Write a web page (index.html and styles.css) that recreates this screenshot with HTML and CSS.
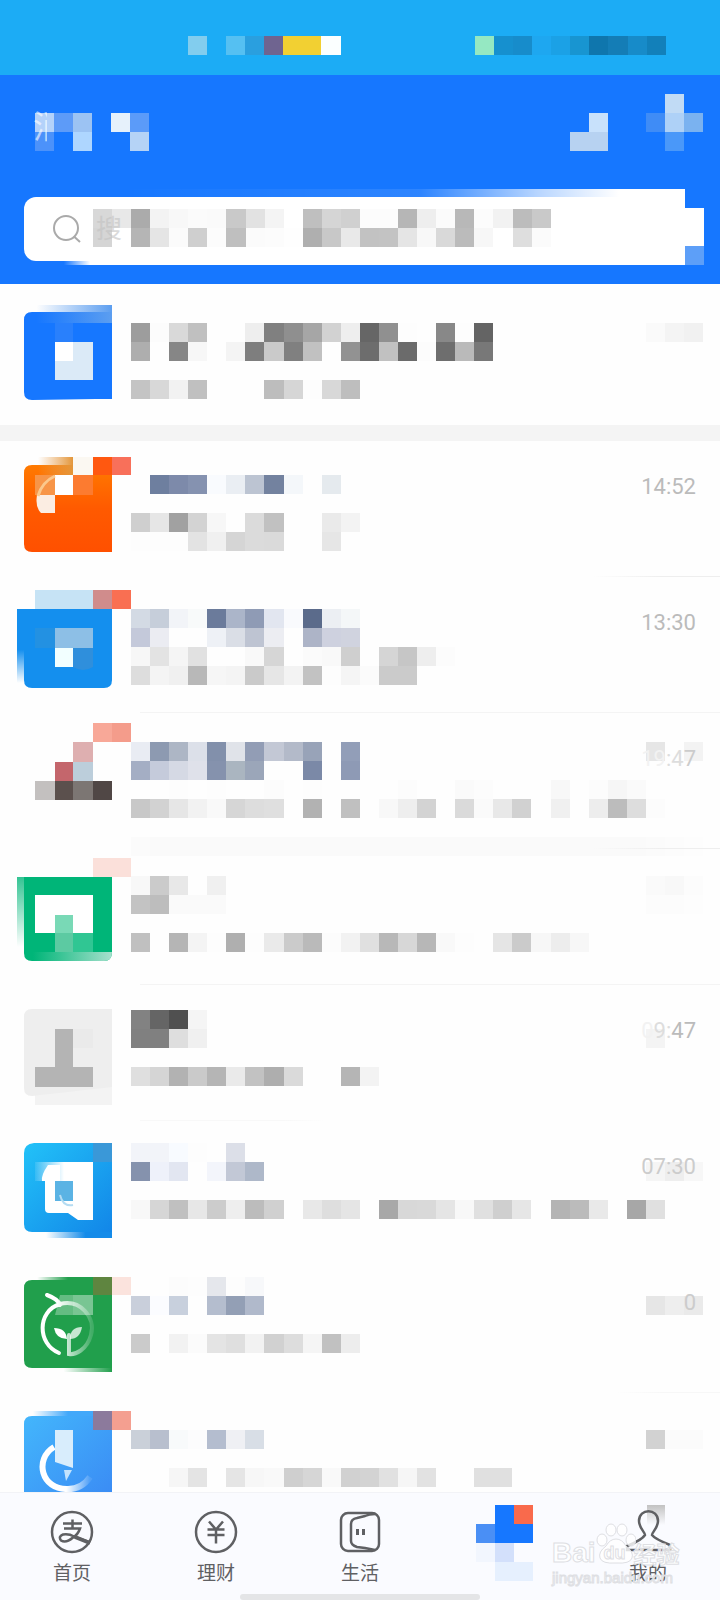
FILE: index.html
```html
<!DOCTYPE html>
<html lang="zh-CN">
<head>
    <meta charset="UTF-8">
    <meta name="viewport" content="width=device-width, initial-scale=1.0">
    <title>消息</title>
    <link rel="stylesheet" href="styles.css">
</head>
<body>
    <!-- Status bar -->
    <div class="status">
      <svg class="mosaic status-left" data-y="0" data-rows="82cdee - 55c0f2 2a9fdf 6f6490 f2d032 f2d032 fbffff"></svg>
      <svg class="mosaic status-right" data-y="0" data-rows="95e8c2 1690cf 178ccb 1ea7f0 1ba1e6 1895d1 0f76ad 147db6 178bc9 1280ba"></svg>
    </div>

    <header class="header">
      <div class="title-row">
        <h1 class="title">
          <svg class="mosaic title-mosaic" data-y="19" data-rows="b4d2fa 5d9bf8 9cc3f3 - e6f1fb 5b9bf9|4c92fa - aed6ff - - b5d3f6"></svg>
          <span class="title-text">消</span>
        </h1>
        <div class="actions">
          <button class="action" type="button" aria-label="通讯录">
            <svg class="mosaic w2" data-y="19" data-rows="- c8e1fb|b7d2f1 b7d2f1"></svg>
          </button>
          <button class="action" type="button" aria-label="添加">
            <svg class="mosaic w3" data-y="0" data-rows="- c1dbf5 -|3f8cf6 aed1f7 7ab2f0|- 4a98f9 -"></svg>
          </button>
        </div>
      </div>
      <form class="search">
        <svg class="search-icon" viewBox="0 0 30 30"><circle cx="14" cy="14" r="12"/><path d="M22 22.5l6 5.5"/></svg>
        <svg class="mosaic search-mosaic" data-y="0" data-rows="d8 e8 ab f3 f8 fb fa c9 e2 f4 - bf d5 d0 fc fc b6 ee fb b8 fc f2 bc c9|d5 - b5 e5 fb cf fc bf fb fc fe af c8 e9 c2 c3 e5 f8 d9 bb f7 - de fb"></svg>
        <input class="search-input" type="search" aria-label="搜索" placeholder="搜">
        <svg class="mosaic search-edge" data-y="0" data-rows="ff|ff|5d9ff8"></svg>
      </form>
    </header>

    <ul class="list">
      <li class="row row-top">
        <svg class="avatar" viewBox="17 284 114 136">
          <defs>
            <linearGradient id="fadeTop"><stop offset=".1" stop-color="#5c9ef0" stop-opacity="0"/><stop offset="1" stop-color="#5c9ef0"/></linearGradient>
          </defs>
          <path fill="#1677ff" d="M32 312h80v87H96l-64 1q-8 0-8-8v-72q0-8 8-8z"/>
          <path fill="url(#fadeTop)" d="M28 305h84v18H28z"/>
          <path fill="#2980fc" d="M55 323h18v19H55z"/>
          <path fill="#dbeaf7" d="M55 342h38v38H55z"/>
          <path fill="#fff" d="M55 342h18v19H55z"/>
        </svg>
        <svg class="mosaic body" data-y="39" data-rows="9d fc d9 c0 - fe ee 80 8f a6 d2 ee 66 90 fd - 88 fd 64|ae - 86 f7 - f4 7e ca 80 c1 - 92 6d c1 6b fc 6e ba 78||c4 d8 f2 c0 - - - bd d6 fd d8 be"></svg>
        <svg class="mosaic time-mosaic" data-y="39" data-rows="fa f4 f1"></svg>
      </li>

      <li class="row line-right">
        <svg class="avatar" viewBox="17 441 114 136">
          <defs>
            <linearGradient id="orange" x2="0" y2="1"><stop offset="0" stop-color="#ff7a00"/><stop offset=".5" stop-color="#ff5a00"/><stop offset="1" stop-color="#ff5000"/></linearGradient>
            <linearGradient id="amber"><stop offset="0" stop-color="#e9a050" stop-opacity="0"/><stop offset="1" stop-color="#e3963a"/></linearGradient>
          </defs>
          <path fill="url(#orange)" d="M32 465h80v87H32q-8 0-8-8v-71q0-8 8-8z"/>
          <path fill="url(#amber)" d="M38 457h35v18H38z"/>
          <path fill="#fbf8f2" d="M73 457h20v18H73z"/>
          <path fill="#ff5810" d="M93 457h19v18H93z"/>
          <path fill="#f8705a" d="M112 457h19v18h-19z"/>
          <path fill="#f79548" d="M35 475h20v20H35z"/>
          <path fill="#fff" d="M55 475h18v20H55z"/>
          <path fill="#fc7b30" d="M73 475h20v20H73z"/>
          <path fill="#fbede2" d="M37 495h18v18H41q-6-6-4-18z"/>
          <path fill="none" stroke="#fbc88c" stroke-width="3" d="M38 496q4-14 17-20"/>
        </svg>
        <svg class="mosaic body" data-y="34" data-rows="- 6e7f9f 7d8aaa 8592b0 f9fbfe eaeef3 bcc4d2 73829f f4f7fa - e5eaee||cf e6 a1 d3 f7 - db c1 - - ea f3|fd fd fd e3 f0 d5 db da - - e6"></svg>
        <time class="time">14:52</time>
      </li>

      <li class="row line-full">
        <svg class="avatar" viewBox="17 577 114 136">
          <defs>
            <linearGradient id="blueSide" x2="0" y2="1"><stop offset="0" stop-color="#148fee"/><stop offset=".55" stop-color="#148fee"/><stop offset="1" stop-color="#148fee" stop-opacity="0"/></linearGradient>
          </defs>
          <path fill="#148fee" d="M24 609h88v71q0 8-8 8H32q-8 0-8-8z"/>
          <path fill="url(#blueSide)" d="M17 609h7v74h-7z"/>
          <path fill="#c6e3f5" d="M35 590h58v19H35z"/>
          <path fill="#d08c8c" d="M93 590h19v19H93z"/>
          <path fill="#f96f52" d="M112 590h19v19h-19z"/>
          <path fill="#2391e2" d="M35 628h20v20H35z"/>
          <path fill="#8dbfe6" d="M55 628h38v20H55z"/>
          <path fill="#f2ffff" d="M55 648h18v19H55z"/>
          <path fill="#2f8fdc" d="M73 648h20v19q-10 6-20 0z"/>
        </svg>
        <svg class="mosaic body" data-y="32" data-rows="d3dae4 c6ceda f2f4f8 f8fafa 6b7b9b abb5c9 8f9bb5 e2e6f0 f9fafd 5b6b8b eceff3 f4f7f8|c4c9da ebecf2 - - eef1f6 dadee6 bec4d2 ecedf2 - adb4c7 ced1df d0d3df|f7 e3 f5 e1 - - f9 d6 - fb f9 cf fe d5 c6 ee fc|dd f4 f0 b8 f6 f4 ca e6 f3 c2 fd f5 fb cb cb"></svg>
        <time class="time">13:30</time>
      </li>

      <li class="row line-right">
        <svg class="avatar" viewBox="17 713 114 136">
          <path fill="#f8a898" d="M93 723h19v19H93z"/>
          <path fill="#f49c8b" d="M112 723h19v19h-19z"/>
          <path fill="#deafb0" d="M73 742h20v20H73z"/>
          <path fill="#c4666c" d="M55 762h18v19H55z"/>
          <path fill="#bccedb" d="M73 762h20v19H73z"/>
          <path fill="#c3c0bf" d="M35 781h20v19H35z"/>
          <path fill="#5b504d" d="M55 781h18v19H55z"/>
          <path fill="#7c7673" d="M73 781h20v19H73z"/>
          <path fill="#504745" d="M93 781h19v19H93z"/>
        </svg>
        <svg class="mosaic body" data-y="29" data-rows="e9ecf3 8d9ab1 adb6c5 dce0e9 8290ab e0e3e9 929db5 c3c8d5 b3bac9 98a3b8 - 929eb8|a4aec4 c5cbdb d5d9e4 dfe1ea 8592ad aab5c0 9ba6b9 - - 7b89a7 - 8e9ab5|- - fd - fd - - fc - fd - - - - fc - - fa fc - - - f8 - fc f6 fa|c8 d2 e6 f2 f9 d6 dd df - b2 - c0 - f8 ee d3 - da fa e8 d1 fe f0 fe ed bc dd fc||fb fa fa fa fa fa fa fa fa fa fa fa fa fa fa fa fa fa fa fa fa fa fa fa fa fa fa fb fc fd"></svg>
        <svg class="mosaic time-mosaic" data-y="29" data-rows="e6 - f3"></svg>
        <time class="time"><span class="gone">19</span><span class="faint">:4</span><span class="soft">7</span></time>
      </li>

      <li class="row line-full">
        <svg class="avatar" viewBox="17 849 114 136">
          <defs>
            <linearGradient id="greenSide" x2="0" y2="1"><stop offset="0" stop-color="#00b578" stop-opacity=".8"/><stop offset="1" stop-color="#00b578" stop-opacity="0"/></linearGradient>
            <linearGradient id="paleFoot"><stop offset=".1" stop-color="#9fe0c8" stop-opacity="0"/><stop offset="1" stop-color="#a8e0cd"/></linearGradient>
          </defs>
          <path fill="#00b578" d="M24 877h88v75q0 9-8 9H32q-8 0-8-8z"/>
          <path fill="url(#greenSide)" d="M17 877h7v70h-7z"/>
          <path fill="url(#paleFoot)" d="M24 952h88q0 9-8 9H32q-8 0-8-9z"/>
          <path fill="#fff" d="M35 895h58v38H35z"/>
          <path fill="#79d9b6" d="M55 915h18v18H55z"/>
          <path fill="#5ccaa2" d="M55 933h18v19H55z"/>
          <path fill="#30c693" d="M73 933h20v19H73z"/>
          <path fill="#fbe0da" d="M93 858h38v19H93z"/>
        </svg>
        <svg class="mosaic body" data-y="27" data-rows="f8 cb e8 - f0|c3 bd fa fa fa||c0 - b5 f4 fd af fd ea cb ba fc f2 e0 b8 d7 b7 f9 fd - e5 cb f7 ed f7"></svg>
        <svg class="mosaic time-mosaic" data-y="27" data-rows="fa f8 fc|fc fc fd"></svg>
      </li>

      <li class="row line-left">
        <svg class="avatar" viewBox="17 985 114 136">
          <path fill="#f3f3f3" d="M35 1087h77v18H35z"/>
          <path fill="#eee" d="M32 1009h80v78l-80 9q-8 0-8-8v-71q0-8 8-8z"/>
          <path fill="#eaeaea" d="M73 1029h20v19H73z"/>
          <path fill="#b4b4b4" d="M55 1029h18v38h20v20H35v-20h20z"/>
        </svg>
        <svg class="mosaic body" data-y="25" data-rows="82 65 50 f5|80 80 de f0||df d5 b2 ca b5 ea c2 ae da fe - b5 f3"></svg>
        <svg class="mosaic time-mosaic" data-y="44" data-rows="f4"></svg>
        <time class="time"><span class="gone">0</span><span class="faint">9:</span>47</time>
      </li>

      <li class="row">
        <svg class="avatar" viewBox="17 1121 114 136">
          <defs>
            <linearGradient id="sky" x2="1" y2="1"><stop offset="0" stop-color="#22c2f8"/><stop offset="1" stop-color="#1286e8"/></linearGradient>
            <linearGradient id="skyFoot"><stop offset=".25" stop-color="#1a90ea" stop-opacity="0"/><stop offset=".7" stop-color="#148be9"/></linearGradient>
            <linearGradient id="whiteIn"><stop offset="0" stop-color="#fff" stop-opacity=".1"/><stop offset=".5" stop-color="#fff"/></linearGradient>
          </defs>
          <path fill="url(#sky)" d="M34 1143h78v89H32q-8 0-8-8v-71q0-9 10-10z"/>
          <path fill="url(#skyFoot)" d="M24 1232h88v6H24z"/>
          <path fill="#3a98d8" d="M93 1143h19v19H93z"/>
          <path fill="url(#whiteIn)" d="M35 1162h58v19H35z"/>
          <path fill="#fff" d="M73 1181h20v39H78l-10-7H49q-4 0-4-4v-28h10v20h18z"/>
          <path fill="#fff" d="M48 1165h12v16H42q-1-6 6-16z"/>
          <path fill="#5bb3e4" d="M55 1181h18v20H55z"/>
          <path fill="none" stroke="#b5dcf2" stroke-width="2" d="M60 1195q3 12 13 10"/>
        </svg>
        <svg class="mosaic body" data-y="22" data-rows="f2f4f9 f2f4f9 f8fbff fd - dcdfe8|8592ad eef1fa e2e6f1 - f3f5fb c2c8d6 aeb8c9||f8 d6 c0 e7 cc ee bc d0 - e8 de e5 - a8 d8 d9 e5 f8 e0 cf e6 - b4 bb e9 - a7 e0"></svg>
        <svg class="mosaic time-mosaic" data-y="41" data-rows="f5 ee f7"></svg>
        <time class="time"><span class="soft">07:30</span></time>
      </li>

      <li class="row line-right-soft">
        <svg class="avatar" viewBox="17 1257 114 136">
          <defs>
            <linearGradient id="leaf"><stop offset=".15" stop-color="#219f4c" stop-opacity="0"/><stop offset=".5" stop-color="#219f4c"/></linearGradient>
            <linearGradient id="leafFoot"><stop offset=".45" stop-color="#219f4c" stop-opacity="0"/><stop offset="1" stop-color="#219f4c"/></linearGradient>
            <linearGradient id="ring"><stop offset=".3" stop-color="#fff"/><stop offset="1" stop-color="#fff" stop-opacity=".15"/></linearGradient>
          </defs>
          <path fill="#219f4c" d="M32 1280h80v88H32q-8 0-8-8v-72q0-8 8-8z"/>
          <path fill="url(#leaf)" d="M24 1277h88v3H24z"/>
          <path fill="url(#leafFoot)" d="M24 1368h88v4H24z"/>
          <path fill="#5f8540" d="M93 1277h19v18H93z"/>
          <path fill="#fbe3dd" d="M112 1277h19v18h-19z"/>
          <path fill="#fff" fill-opacity=".3" d="M60 1295h13v20H55z"/>
          <path fill="#fff" fill-opacity=".4" d="M73 1295h20v20H73z"/>
          <path fill="none" stroke="url(#ring)" stroke-width="4" stroke-linecap="round" d="M47 1295q11 4 13 10M59 1353c-22-9-22-42 1-49c20-5 36 13 31 31c-4 15-16 20-22 19v-19"/>
          <path fill="#fff" d="M54 1328q12 0 13 11q-11 0-13-11z"/>
          <path fill="#fff" fill-opacity=".75" d="M82 1327q-12 0-12 12q10 0 12-12z"/>
        </svg>
        <svg class="mosaic body" data-y="20" data-rows="- - fc fd e5e7ec fd f7f8fa|c9cfdb fbfcff c8d0dd - b4bdce 939fb5 b0b9cb||cb fe f2 fb e4 df f2 d1 dd f5 c1 ed"></svg>
        <svg class="mosaic time-mosaic" data-y="39" data-rows="e6 ee ea"></svg>
        <time class="time"><span class="soft">0</span></time>
      </li>

      <li class="row">
        <svg class="avatar" viewBox="17 1393 114 136">
          <defs>
            <linearGradient id="azure" x2="1" y2="1"><stop offset="0" stop-color="#43b6fc"/><stop offset="1" stop-color="#3a8af4"/></linearGradient>
            <linearGradient id="azureTop"><stop offset=".1" stop-color="#43aafa" stop-opacity="0"/><stop offset=".5" stop-color="#42a8fa"/></linearGradient>
            <linearGradient id="ringFade"><stop offset=".5" stop-color="#fff"/><stop offset="1" stop-color="#fff" stop-opacity=".1"/></linearGradient>
          </defs>
          <path fill="url(#azure)" d="M32 1416h80v85H24v-77q0-8 8-8z"/>
          <path fill="url(#azureTop)" d="M24 1411h88v5H24z"/>
          <path fill="#8c7a9c" d="M93 1411h19v19H93z"/>
          <path fill="#f49f90" d="M112 1411h19v19h-19z"/>
          <path fill="none" stroke="url(#ringFade)" stroke-width="6" d="M54 1447c-20 12-13 43 14 42q14 0 22-12"/>
          <path fill="#d8edfc" d="M55 1430h18v38l-18-6z"/>
          <path fill="#c3e3fd" d="M64 1470h8l-6 11z"/>
        </svg>
        <svg class="mosaic body" data-y="37" data-rows="cad0d9 b8bfce f8fafb fcfcfd b4bdcf eff0f4 d8dee6||- - f6 e4 - e5 f7 f9 cf d6 f9 d1 d3 e1 f6 e2 - fe e0 e0"></svg>
        <svg class="mosaic time-mosaic" data-y="37" data-rows="d2 fb fb"></svg>
      </li>
    </ul>

    <!-- Bottom tabs -->
    <nav class="tabs">
      <button class="tab" type="button">
        <svg class="tab-icon" viewBox="0 0 46 46">
          <circle cx="23" cy="23" r="20"/>
          <path d="M14 14.500h19M23.500 10.500v9M15 19.500h16q-2 6-7 9q-7 6-12 3q-3-4 2-6q6-1 11 2l16 6"/>
          <path d="M26 28l15 6" stroke-width="4"/>
        </svg>
        <span class="tab-label">首页</span>
      </button>
      <button class="tab" type="button">
        <svg class="tab-icon" viewBox="0 0 46 46">
          <circle cx="23" cy="23" r="20"/>
          <path d="M16 12.500l7 8l7-8M14.500 20.500h17M14.500 26h17M23 20v14.500" stroke-width="2.500"/>
        </svg>
        <span class="tab-label">理财</span>
      </button>
      <button class="tab" type="button">
        <svg class="tab-icon" viewBox="0 0 46 46">
          <rect x="4" y="4" width="38" height="38" rx="7"/>
          <path d="M38 5q-6 0-10 2l-8 2q-6 1-6 6v17q0 4 6 6l8 1q5 1 10 2"/>
          <path d="M20.500 20v6M26.500 20v6" stroke-width="3"/>
        </svg>
        <span class="tab-label">生活</span>
      </button>
      <button class="tab tab-current" type="button" aria-label="消息">
        <svg class="mosaic tab-mosaic" data-y="0" data-rows="- 1677ff f96a4c|4a8ff5 1677ff 1677ff|f2f6fe d3e0fb -|- e6f0fe e6f0fe"></svg>
      </button>
      <button class="tab" type="button">
        <svg class="tab-icon" viewBox="0 0 46 46">
          <defs>
            <linearGradient id="shade" x2="0" y2="1"><stop offset="0" stop-color="#c2c2c2"/><stop offset="1" stop-color="#c2c2c2" stop-opacity="0"/></linearGradient>
          </defs>
          <path fill="url(#shade)" stroke="none" d="M22-4h18v20H22z"/>
          <path d="M20 26c0-3-6-7-6-14c0-13 19-13 19 0c0 7-6 11-6 14q3 4 18 10v5H2v-4q15-6 18-11z"/>
        </svg>
        <span class="tab-label">我的</span>
      </button>
      <div class="watermark">
        <svg class="paw" viewBox="0 0 40 42">
          <ellipse cx="6" cy="17" rx="5" ry="6"/><ellipse cx="15" cy="7" rx="5" ry="6"/><ellipse cx="26" cy="7" rx="5" ry="6"/><ellipse cx="35" cy="17" rx="5" ry="6"/>
          <path d="M20 16q6 0 10 7q8 6 6 12q-2 6-16 5q-14 1-16-5q-2-6 6-12q4-7 10-7z"/>
        </svg>
        <div class="brand"><span>Bai</span><span class="du">du</span><span class="jingyan">经验</span></div>
        <div class="site">jingyan.baidu.com</div>
      </div>
      <div class="home-bar"></div>
    </nav>

    <script src="script.js"></script>
</body>
</html>
```

FILE: styles.css
```css
:root {
  --blue: #1677ff;
  --sky: #1cacf5;
  --tabs: #fafbff;
  --icon: #5f6063;
  --font: Roboto, "Noto Sans CJK SC", sans-serif;
}

* {
  box-sizing: border-box;
}

body {
  margin: 0;
  height: 100vh;
  display: flex;
  flex-direction: column;
  background: #fefefe;
  font-family: var(--font);
}

button {
  padding: 0;
  border: 0;
  background: none;
  font-family: inherit;
}

svg {
  display: block;
  flex: none;
}

.mosaic {
  overflow: visible;
  shape-rendering: crispEdges;
}

/* Status bar */
.status {
  display: flex;
  flex: none;
  justify-content: space-between;
  height: 75px;
  padding: 36px 55px 0 188px;
  background: var(--sky);
}

.status-left {
  width: 153px;
  height: 19px;
}

.status-right {
  width: 190px;
  height: 19px;
}

/* Header */
.header {
  flex: none;
  padding: 19px 17px 23px 24px;
  background: var(--blue);
}

.title-row {
  display: flex;
  justify-content: space-between;
}

.title {
  position: relative;
  margin: 0 0 0 11px;
  color: #fff;
  font-size: 32px;
  font-weight: 400;
  line-height: 36px;
}

.title-mosaic {
  width: 114px;
  height: 57px;
}

/* only the left part of the glyph stays readable */
.title-text {
  position: absolute;
  top: 15px;
  left: -2px;
  width: 14px;
  overflow: hidden;
  opacity: 0.6;
}

.actions {
  display: flex;
  gap: 38px;
}

.w2 {
  width: 38px;
  height: 57px;
}

.w3 {
  width: 57px;
  height: 57px;
}

/* Search */
.search {
  position: relative;
  display: flex;
  align-items: center;
  height: 64px;
  margin: 46px 18px 0 0;
  background: #fff;
  border-radius: 12px 0 0 12px;
}

.search::before,
.search::after {
  content: '';
  position: absolute;
  left: 0;
  right: 0;
}

.search::before {
  top: -8px;
  height: 8px;
  background: linear-gradient(90deg, transparent 15%, rgba(255, 255, 255, 0.1) 60%, rgba(255, 255, 255, 0.7) 78%, #fff 90%);
}

.search::after {
  top: 63px;
  height: 5px;
  background: linear-gradient(90deg, transparent 6%, #fff 10%);
}

.search-icon {
  width: 30px;
  height: 30px;
  margin-left: 28px;
  fill: none;
  stroke: #aaa;
  stroke-width: 2;
}

.search-mosaic {
  position: absolute;
  top: 12px;
  left: 69px;
  width: 458px;
  height: 38px;
}

.search-input {
  position: relative;
  flex: 1;
  min-width: 0;
  height: 48px;
  margin-left: 14px;
  padding: 0;
  border: 0;
  outline: 0;
  background: none;
  font-family: inherit;
  font-size: 26px;
}

.search-input::placeholder {
  color: #c2c2c2;
  opacity: 0.6;
}

.search-edge {
  position: absolute;
  top: 11px;
  right: -19px;
  width: 19px;
  height: 57px;
}

/* Conversation list */
.list {
  flex: 1;
  min-height: 0;
  margin: 0;
  padding: 0;
  overflow: hidden;
  list-style: none;
}

.row {
  position: relative;
  display: flex;
  padding: 0 24px 0 17px;
}

.row-top {
  height: 157px;
  border-bottom: 16px solid #f4f4f4;
}

.row::after {
  content: '';
  position: absolute;
  right: 0;
  bottom: 0;
  left: 140px;
  height: 1px;
}

.line-right::after {
  background: linear-gradient(90deg, transparent 78%, #eee 90%);
}

.line-right-soft::after {
  background: linear-gradient(90deg, transparent 82%, #f7f7f7 90%);
}

.line-left::after {
  background: linear-gradient(90deg, #f8f8f8 25%, transparent 32%);
}

.line-full::after {
  background: #f4f4f4;
}

.avatar {
  width: 114px;
  height: 136px;
}

.body {
  flex: 1;
  min-width: 0;
  height: 136px;
}

.time {
  position: relative;
  padding-top: 34px;
  color: #bbb;
  font-size: 22px;
  line-height: 24px;
}

.time-mosaic {
  position: absolute;
  top: 0;
  right: 17px;
  width: 57px;
  height: 136px;
}

.soft {
  color: #ccc;
}

.faint {
  color: #ddd;
}

.gone {
  color: #f2f2f2;
}

/* Bottom tabs */
.tabs {
  position: relative;
  display: flex;
  flex: none;
  height: 108px;
  border-top: 1px solid #f2f3f7;
  background: var(--tabs);
}

.tab {
  display: flex;
  flex: 1;
  flex-direction: column;
  align-items: center;
  padding-top: 16px;
  color: var(--icon);
}

.tab-current {
  padding-top: 12px;
}

.tab-icon {
  width: 46px;
  height: 46px;
  overflow: visible;
  fill: none;
  stroke: var(--icon);
  stroke-width: 2.5;
}

.tab-label {
  margin-top: 6px;
  font-size: 19px;
  line-height: 26px;
}

.tab-mosaic {
  width: 57px;
  height: 76px;
}

.home-bar {
  position: absolute;
  bottom: 0;
  left: 33.3%;
  right: 33.3%;
  height: 6px;
  background: #e4e5e7;
  border-radius: 3px;
}

.watermark {
  position: absolute;
  top: 30px;
  right: 38px;
  width: 130px;
  color: rgba(255, 255, 255, 0.8);
  font-family: "Liberation Sans", "Noto Sans CJK SC", sans-serif;
  font-weight: 700;
  white-space: nowrap;
  -webkit-text-stroke: 1px #dedfe3;
  pointer-events: none;
}

.paw {
  position: absolute;
  top: 0;
  left: 44px;
  width: 40px;
  height: 42px;
  fill: rgba(255, 255, 255, 0.8);
  stroke: #dedfe3;
}

.brand {
  position: relative;
  display: flex;
  align-items: center;
  height: 32px;
  margin-top: 14px;
  font-size: 28px;
}

.du {
  margin-left: 8px;
  font-size: 18px;
}

.jingyan {
  margin-left: 8px;
  font-size: 23px;
}

.site {
  font-size: 15px;
  font-weight: 400;
  line-height: 18px;
}
```

FILE: script.js
```js
// Draws each .mosaic from its data-rows: rows split by "|", cells by spaces.
// Two digits is a grey, six digits a full colour, "-" leaves the cell empty.
const CELL = 19.07;
const NS = 'http://www.w3.org/2000/svg';

document.querySelectorAll('.mosaic').forEach(function (svg) {
  const top = Number(svg.dataset.y);
  svg.dataset.rows.split('|').forEach(function (row, r) {
    if (!row) return;
    const y = Math.round(top + r * CELL);
    const bottom = Math.round(top + (r + 1) * CELL);
    row.split(' ').forEach(function (cell, c) {
      if (cell === '-') return;
      const x = Math.round(c * CELL);
      const rect = document.createElementNS(NS, 'rect');
      rect.setAttribute('x', x);
      rect.setAttribute('y', y);
      rect.setAttribute('width', Math.round((c + 1) * CELL) - x);
      rect.setAttribute('height', bottom - y);
      rect.setAttribute('fill', '#' + (cell.length === 2 ? cell + cell + cell : cell));
      svg.appendChild(rect);
    });
  });
});
```
